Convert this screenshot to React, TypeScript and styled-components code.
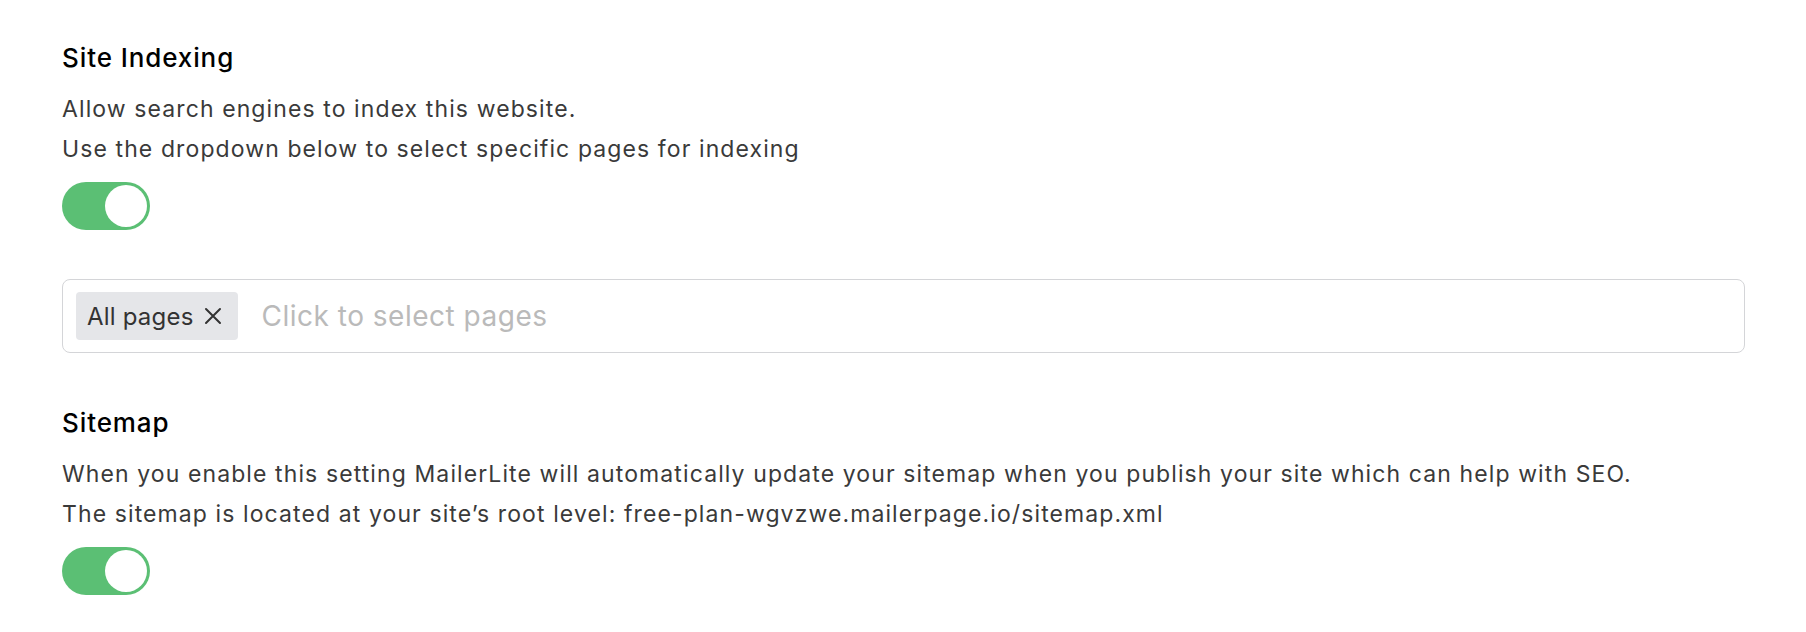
import { useState } from "react";
import styled, { createGlobalStyle } from "styled-components";

const GlobalStyle = createGlobalStyle`
  body {
    margin: 0;
    background: #ffffff;
    font-family: Inter, "Noto Sans", sans-serif;
  }
`;

export default function App() {
  const [indexing, setIndexing] = useState(true);
  const [sitemap, setSitemap] = useState(true);
  const [pages, setPages] = useState<string[]>(["All pages"]);

  return (
    <Page>
      <GlobalStyle />
      <Section>
        <Title>Site Indexing</Title>
        <Description>
          <Line>Allow search engines to index this website.</Line>
          <Line>Use the dropdown below to select specific pages for indexing</Line>
        </Description>
        <Toggle on={indexing} onClick={() => setIndexing(!indexing)}>
          <Knob />
        </Toggle>
      </Section>

      <Select>
        {pages.map((page) => (
          <Chip key={page}>
            {page}
            <ChipClose onClick={() => setPages(pages.filter((p) => p !== page))}>
              <svg width="18" height="18" viewBox="0 0 18 18" fill="none">
                <path d="M2 2L16 16M16 2L2 16" stroke="#333" strokeWidth="2" strokeLinecap="round" />
              </svg>
            </ChipClose>
          </Chip>
        ))}
        <Placeholder>Click to select pages</Placeholder>
      </Select>

      <Section>
        <Title>Sitemap</Title>
        <Description>
          <Line>
            When you enable this setting MailerLite will automatically update your sitemap when you
            publish your site which can help with SEO.
          </Line>
          <Line>The sitemap is located at your site’s root level: free-plan-wgvzwe.mailerpage.io/sitemap.xml</Line>
        </Description>
        <Toggle on={sitemap} onClick={() => setSitemap(!sitemap)}>
          <Knob />
        </Toggle>
      </Section>
    </Page>
  );
}

const Page = styled.div`
  padding: 42px 61px 38px 62px;
  display: flex;
  flex-direction: column;
`;

const Section = styled.div`
  display: flex;
  flex-direction: column;
  align-items: flex-start;
`;

const Title = styled.h2`
  margin: 0;
  font-size: 26px;
  line-height: 32px;
  font-weight: 500;
  letter-spacing: 0.9px;
  color: #000;
`;

const Description = styled.div`
  margin-top: 15px;
`;

const Line = styled.p`
  margin: 0;
  font-size: 23px;
  line-height: 40px;
  color: #3a3a3a;
  letter-spacing: 1.1px;
`;

const Toggle = styled.button<{ on: boolean }>`
  margin-top: 13px;
  width: 88px;
  height: 48px;
  padding: 3px;
  border: none;
  border-radius: 24px;
  background: ${(p) => (p.on ? "#5bbf74" : "#d4d5d8")};
  display: flex;
  justify-content: ${(p) => (p.on ? "flex-end" : "flex-start")};
  align-items: center;
  cursor: pointer;
`;

const Knob = styled.span`
  width: 42px;
  height: 42px;
  border-radius: 50%;
  background: #fff;
`;

const Select = styled.div`
  margin: 49px 0 54px;
  height: 74px;
  box-sizing: border-box;
  border: 1.5px solid #d4d5d8;
  border-radius: 8px;
  padding: 0 13px;
  display: flex;
  align-items: center;
  gap: 24px;
`;

const Chip = styled.span`
  height: 48px;
  box-sizing: border-box;
  padding: 0 16px 0 11px;
  border-radius: 4px;
  background: #e5e6e9;
  display: flex;
  align-items: center;
  gap: 10px;
  font-size: 24px;
  letter-spacing: 0.2px;
  color: #333;
`;

const ChipClose = styled.span`
  display: flex;
  align-items: center;
  cursor: pointer;
`;

const Placeholder = styled.span`
  font-size: 28px;
  letter-spacing: 0.5px;
  color: #bababa;
`;
